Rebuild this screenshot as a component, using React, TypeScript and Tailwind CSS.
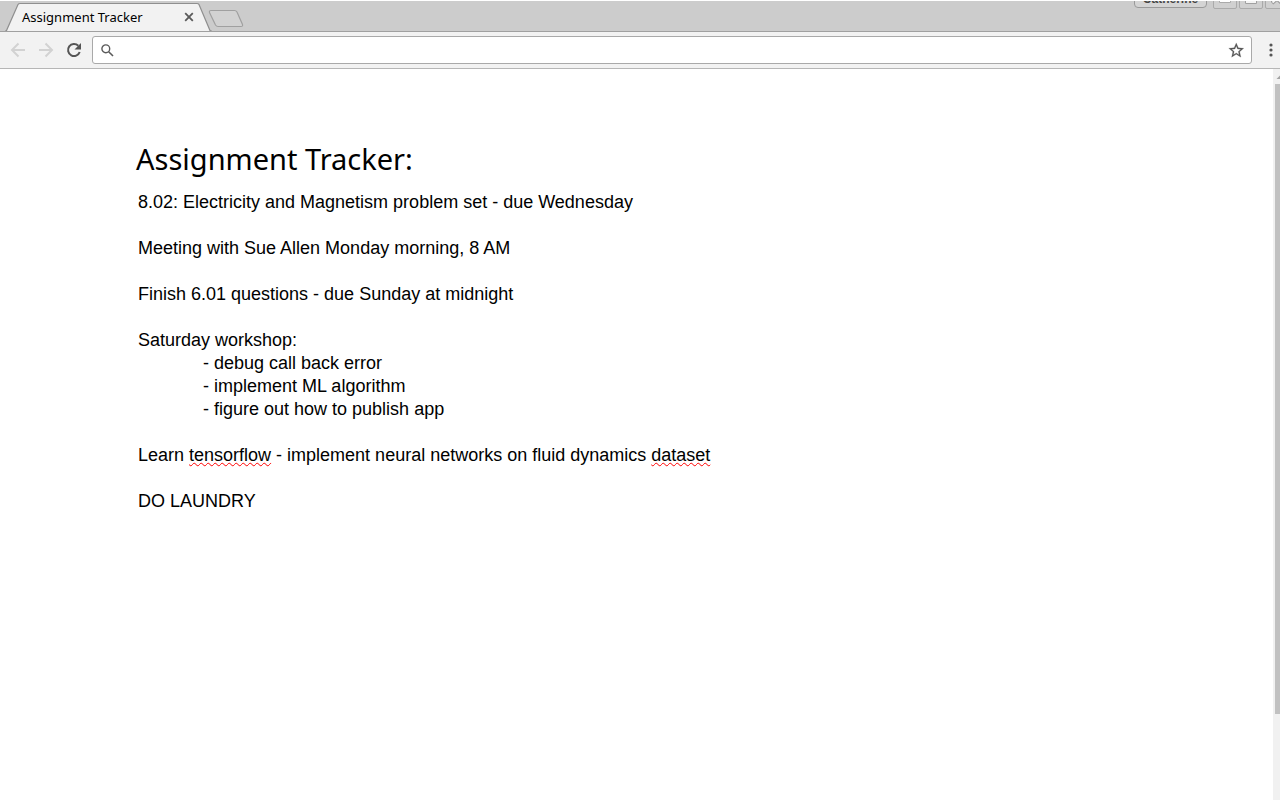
import React from "react";

const notes: React.ReactNode[] = [
  "8.02: Electricity and Magnetism problem set - due Wednesday",
  "",
  "Meeting with Sue Allen Monday morning, 8 AM",
  "",
  "Finish 6.01 questions - due Sunday at midnight",
  "",
  "Saturday workshop:",
];

const workshop = ["debug call back error", "implement ML algorithm", "figure out how to publish app"];

function Misspelled({ children }: { children: string }) {
  return (
    <span className="underline decoration-[#ff0000] decoration-wavy decoration-1 underline-offset-1 [text-decoration-skip-ink:none]">
      {children}
    </span>
  );
}

function TabStrip() {
  return (
    <div className="flex h-[31px] items-start overflow-hidden bg-[#cccccc] border-b border-[#a0a0a0]">
      <div className="relative -mb-px ml-[5px] h-[31px] w-[207px] shrink-0">
        <svg className="absolute inset-0" width="207" height="31" viewBox="0 0 207 31" fill="none" aria-hidden="true">
          <path d="M0 31 L1.5 29.5 L13 3.5 Q13.5 2.5 15 2.5 H192 Q193.500 2.500 194 3.500 L205 29.500 L207 31 Z" fill="#f2f2f2" />
          <path d="M0 30.500 L1.500 29.500 L13 3.500 Q13.500 2.500 15 2.500 H192 Q193.500 2.500 194 3.500 L205 29.500 L207 30.500" stroke="#8f8f8f" strokeWidth="1.200" />
        </svg>
        <div className="relative flex h-full items-center justify-between pt-px pr-[17px] pl-[17px]">
          <span className="text-[13px] leading-4 text-black">Assignment Tracker</span>
          <button type="button" aria-label="Close tab" className="flex size-3 items-center justify-center">
            <svg width="10" height="10" viewBox="0 0 10 10" fill="none" stroke="#5a5a5a" strokeWidth="1.8">
              <path d="M1.200 1.200 L8.800 8.800 M8.800 1.200 L1.200 8.800" />
            </svg>
          </button>
        </div>
      </div>
      <button type="button" aria-label="New tab" className="mt-2 -ml-1">
        <svg width="36" height="19" viewBox="0 0 36 19" fill="none">
          <path d="M3 1.500 H26.500 Q28 1.500 29 3 L34.500 15.500 Q35 17.500 33 17.500 H10 Q8.500 17.500 7.500 16 L1.500 3.500 Q1 1.500 3 1.500 Z" fill="#d2d2d2" stroke="#a0a0a0" strokeWidth="1.200" />
        </svg>
      </button>
      <div className="-mr-[9px] ml-auto flex shrink-0 items-start">
        <button type="button" className="-mt-3 mr-[6px] flex h-[19px] w-[73px] items-center justify-center rounded-[4px] border border-[#999999] bg-[#d4d4d4] font-['Liberation_Sans',sans-serif] text-[12px] leading-4 font-bold text-[#444444]">
          Catherine
        </button>
        <div className="-mt-3 flex gap-[2px]">
          <button type="button" aria-label="Minimize" className="flex h-5 w-6 items-center justify-center rounded-[2px] border border-[#aaaaaa] bg-[#d0d0d0]">
            <svg width="12" height="12" viewBox="0 0 12 12"><path d="M0.500 5.500 H11.500 V9.500 H0.500 Z" fill="#fff" stroke="#aaa" /></svg>
          </button>
          <button type="button" aria-label="Maximize" className="flex h-5 w-6 items-center justify-center rounded-[2px] border border-[#aaaaaa] bg-[#d0d0d0]">
            <svg width="12" height="12" viewBox="0 0 12 12" fill="none"><path d="M0.500 0.500 H11.500 V10.500 H0.500 Z" fill="#f4f4f4" stroke="#a0a0a0" /><path d="M3.500 3.500 H8.500 V7.500 H3.500 Z" fill="#d0d0d0" stroke="#a0a0a0" /></svg>
          </button>
          <button type="button" aria-label="Close" className="flex h-5 w-6 items-center justify-center rounded-[2px] border border-[#aaaaaa] bg-[#d0d0d0]">
            <svg width="12" height="12" viewBox="0 0 12 12"><path d="M1 1 L11 10 M11 1 L1 10" stroke="#999" strokeWidth="4" /><path d="M1.500 1.500 L10.500 9.500 M10.500 1.500 L1.500 9.500" stroke="#f4f4f4" strokeWidth="2" /></svg>
          </button>
        </div>
      </div>
    </div>
  );
}

function Toolbar() {
  return (
    <div className="flex h-[37px] items-center border-b border-[#b6b6b6] bg-[#f2f2f2] pl-[10px]">
      <div className="flex gap-3">
        <button type="button" aria-label="Back" className="size-4">
          <svg width="16" height="16" viewBox="0 0 16 16" fill="none" stroke="#d2d2d2" strokeWidth="2"><path d="M15 8 H2.500 M8.500 1.500 L2 8 L8.500 14.500" /></svg>
        </button>
        <button type="button" aria-label="Forward" className="size-4">
          <svg width="16" height="16" viewBox="0 0 16 16" fill="none" stroke="#d2d2d2" strokeWidth="2"><path d="M1 8 H13.500 M7.500 1.500 L14 8 L7.500 14.500" /></svg>
        </button>
        <button type="button" aria-label="Reload" className="size-4">
          <svg width="16" height="16" viewBox="0 0 16 16" fill="none"><path d="M13.700 10 A6 6 0 1 1 12.300 3.800" stroke="#555" strokeWidth="2" /><path d="M15 1 V7.500 H8.500 Z" fill="#555" /></svg>
        </button>
      </div>
      <div className="ml-[10px] flex h-7 flex-1 items-center rounded-[3px] border border-[#a9a9a9] bg-white px-2">
        <svg width="13" height="13" viewBox="0 0 13 13" fill="none" stroke="#5a5a5a" strokeWidth="1.400" aria-hidden="true"><circle cx="4.800" cy="4.800" r="3.900" /><path d="M7.700 7.700 L12 12" strokeWidth="1.600" /></svg>
        <input type="text" aria-label="Search or enter address" className="mx-2 min-w-0 flex-1 text-[14px] outline-none" />
        <button type="button" aria-label="Bookmark this page" className="-mr-1 size-[18px]">
          <svg width="18" height="18" viewBox="1 0 24 24" className="-ml-px" fill="#555"><path transform="translate(0 .5)" d="M22 9.240l-7.190-.62L12 2 9.190 8.630 2 9.240l5.460 4.730L5.820 21 12 17.270 18.180 21l-1.630-7.030L22 9.240zM12 15.400l-3.760 2.270 1-4.280-3.320-2.880 4.380-.38L12 6.100l1.710 4.040 4.380.38-3.320 2.880 1 4.280L12 15.400z" stroke="#555" strokeWidth=".3" /></svg>
        </button>
      </div>
      <button type="button" aria-label="Menu" className="flex w-7 justify-end pr-[7px]">
        <svg width="4" height="14" viewBox="0 0 4 14" fill="#555"><circle cx="2" cy="2" r="1.600" /><circle cx="2" cy="7" r="1.600" /><circle cx="2" cy="12" r="1.600" /></svg>
      </button>
    </div>
  );
}

function Scrollbar() {
  return (
    <div className="flex w-[7px] shrink-0 flex-col overflow-hidden bg-[#f1f1f1]" aria-hidden="true">
      <svg className="shrink-0" width="15" height="15" viewBox="0 0 15 15"><path d="M3.500 10 L7.500 6 L11.500 10 Z" fill="#a3a3a3" /></svg>
      <div className="flex-1">
        <div className="ml-[2px] h-[88%] bg-[#c1c1c1]" />
      </div>
    </div>
  );
}

export default function App() {
  return (
    <div className="flex min-h-screen flex-col bg-white pt-px font-['Noto_Sans',sans-serif]">
      <TabStrip />
      <Toolbar />
      <div className="flex flex-1">
        <main className="min-w-0 flex-1 px-[136px] pt-[68px] text-black">
          <h1 className="text-[29px] leading-[44px]">Assignment Tracker:</h1>
          <div
            role="textbox"
            aria-multiline="true"
            aria-label="Assignments"
            contentEditable
            suppressContentEditableWarning
            spellCheck={false}
            className="mt-[10px] px-[2px] font-['Liberation_Sans',Arial,sans-serif] text-[18px] leading-[23px] outline-none"
          >
            {notes.map((line, i) => (
              <div key={i} className="min-h-[23px]">{line}</div>
            ))}
            {workshop.map((line) => (
              <div key={line} className="pl-[65px]">- {line}</div>
            ))}
            <div className="mt-[23px]">
              Learn <Misspelled>tensorflow</Misspelled> - implement neural networks on fluid dynamics <Misspelled>dataset</Misspelled>
            </div>
            <div className="mt-[23px]">DO LAUNDRY</div>
          </div>
        </main>
        <Scrollbar />
      </div>
    </div>
  );
}
